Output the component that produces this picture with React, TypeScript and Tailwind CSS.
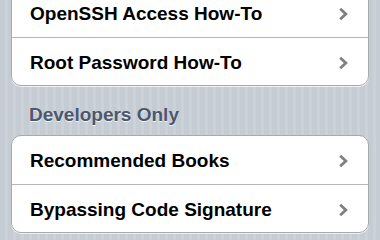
type RowProps = { label: string; first?: boolean };

function Chevron() {
  return (
    <svg width="11" height="14" viewBox="0 0 11 14" className="shrink-0">
      <path d="M2.2 1.8 L7.8 7 L2.2 12.2" fill="none" stroke="#808080" strokeWidth="2.8" strokeLinejoin="miter" />
    </svg>
  );
}

function Row({ label, first }: RowProps) {
  return (
    <div
      className={
        'flex h-[48px] items-center justify-between pl-[18px] pr-[19px] pt-[2px] ' +
        (first ? '' : 'border-t border-[#b4b6b9]')
      }
    >
      <span className="text-[19px] font-bold leading-[22px] text-black">{label}</span>
      <Chevron />
    </div>
  );
}

function Group({ rows, className }: { rows: string[]; className?: string }) {
  return (
    <div
      className={
        'overflow-hidden rounded-[10px] border border-[#a6aaaf] bg-white shadow-[0_1px_0_rgba(255,255,255,0.7)] ' +
        (className ?? '')
      }
    >
      {rows.map((r, i) => (
        <Row key={r} label={r} first={i === 0} />
      ))}
    </div>
  );
}

export default function App() {
  return (
    <div
      className="h-[240px] w-[380px] overflow-hidden bg-[#c7ced5] bg-[image:repeating-linear-gradient(90deg,#c5ccd4_0px,#c5ccd4_5px,#cbd2d8_5px,#cbd2d8_8px)] px-[11px]"
      style={{ fontFamily: '"Liberation Sans", Arial, sans-serif' }}
    >
      <Group rows={['OpenSSH Access How-To', 'Root Password How-To']} className="-mt-[12px]" />

      {/* section header */}
      <div className="h-[49px] pl-[18px] pt-[18px]">
        <div className="text-[19px] font-bold leading-[22px] text-[#4c566c] [text-shadow:0_1px_0_rgba(255,255,255,0.8)]">
          Developers Only
        </div>
      </div>

      <Group rows={['Recommended Books', 'Bypassing Code Signature']} />
    </div>
  );
}
